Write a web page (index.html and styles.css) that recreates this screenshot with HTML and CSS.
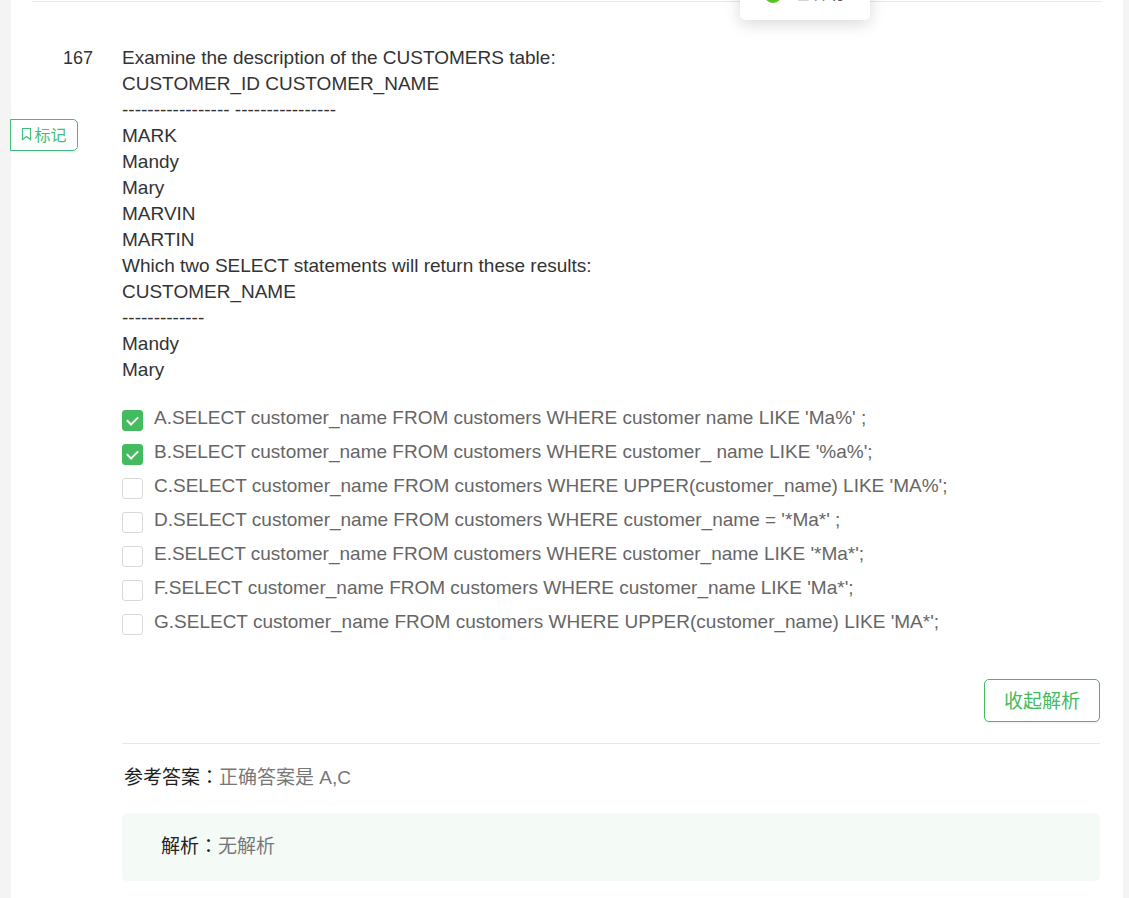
FILE: index.html
```html
<!DOCTYPE html>
<html lang="zh-CN">
<head>
    <meta charset="UTF-8">
    <meta name="viewport" content="width=device-width, initial-scale=1.0">
    <title>答题解析</title>
    <link rel="stylesheet" href="styles.css">
</head>
<body>
    <div class="message" role="status">
        <svg class="message-icon" viewBox="0 0 18 18" aria-hidden="true">
            <circle cx="9" cy="9" r="9" fill="#52c41a"/>
            <path d="M5 9l3 3 5-6" fill="none" stroke="#fff" stroke-width="2"/>
        </svg>
        <span>已保存</span>
    </div>

    <main class="paper">
        <section class="question">
            <div class="side">
                <span class="number">167</span>
                <button type="button" class="mark-btn">
                    <svg class="mark-icon" viewBox="0 0 12 14" aria-hidden="true">
                        <path d="M1.5 1.5h8v11L5.5 9.5l-4 3z" fill="none" stroke="currentColor" stroke-width="1.2"/>
                    </svg>
                    <span>标记</span>
                </button>
            </div>

            <div class="content">
                <div class="stem">
                    Examine the description of the CUSTOMERS table:<br>
                    CUSTOMER_ID CUSTOMER_NAME<br>
                    ----------------- ----------------<br>
                    MARK<br>
                    Mandy<br>
                    Mary<br>
                    MARVIN<br>
                    MARTIN<br>
                    Which two SELECT statements will return these results:<br>
                    CUSTOMER_NAME<br>
                    -------------<br>
                    Mandy<br>
                    Mary
                </div>

                <div class="options">
                    <label class="option"><input type="checkbox" checked><span>A.SELECT customer_name FROM customers WHERE customer name LIKE 'Ma%' ;</span></label>
                    <label class="option"><input type="checkbox" checked><span>B.SELECT customer_name FROM customers WHERE customer_ name LIKE '%a%';</span></label>
                    <label class="option"><input type="checkbox"><span>C.SELECT customer_name FROM customers WHERE UPPER(customer_name) LIKE 'MA%';</span></label>
                    <label class="option"><input type="checkbox"><span>D.SELECT customer_name FROM customers WHERE customer_name = '*Ma*' ;</span></label>
                    <label class="option"><input type="checkbox"><span>E.SELECT customer_name FROM customers WHERE customer_name LIKE '*Ma*';</span></label>
                    <label class="option"><input type="checkbox"><span>F.SELECT customer_name FROM customers WHERE customer_name LIKE 'Ma*';</span></label>
                    <label class="option"><input type="checkbox"><span>G.SELECT customer_name FROM customers WHERE UPPER(customer_name) LIKE 'MA*';</span></label>
                </div>

                <div class="actions">
                    <button type="button" class="toggle-btn">收起解析</button>
                </div>

                <div class="answer"><b>参考答案<span class="colon" lang="zh-TW">：</span></b>正确答案是 A,C</div>
                <div class="analysis"><b>解析<span class="colon" lang="zh-TW">：</span></b>无解析</div>
            </div>
        </section>
    </main>
</body>
</html>
```

FILE: styles.css
```css
* {
    box-sizing: border-box;
}
body {
    margin: 0;
    background-color: #f4f4f4;
    color: #333;
    font-family: "Liberation Sans", Arial, "Noto Sans CJK SC", sans-serif;
    font-size: 19px;
    line-height: 26px;
}
button {
    font-family: inherit;
    background-color: #fff;
    color: #44bb5e;
    border: 1px solid #44bb5e;
    border-radius: 5px;
    box-shadow: 0 2px 2px rgba(0, 0, 0, 0.04);
    cursor: pointer;
}

.message {
    position: absolute;
    top: -32px;
    left: 740px;
    width: 130px;
    height: 52px;
    padding: 0 24px;
    display: flex;
    align-items: center;
    gap: 12px;
    background-color: #fff;
    border-radius: 5px;
    box-shadow: 0 4px 16px rgba(0, 0, 0, 0.15);
    color: #555;
    font-size: 18px;
    line-height: 24px;
    white-space: nowrap;
}
.message span {
    padding-bottom: 2px;
}
.message-icon {
    width: 18px;
    height: 18px;
    flex: none;
}

.paper {
    min-height: 100vh;
    margin: 0 6px 0 11px;
    padding: 1px 21px 17px;
    background-color: #fff;
}
.question {
    display: flex;
    border-top: 1px solid #e8e8e8;
    padding: 43px 2px 0 0;
}
.side {
    width: 90px;
    flex: none;
}
.number {
    display: block;
    padding-left: 31px;
    font-size: 18px;
}
.mark-btn {
    display: flex;
    align-items: center;
    justify-content: center;
    gap: 1px;
    width: 68px;
    height: 32px;
    margin: 48px 0 0 -22px;
    padding: 0 0 2px;
    border-color: #41be7c;
    border-radius: 0 5px 5px 0;
    color: #41be7c;
    font-size: 16px;
}
.mark-icon {
    width: 12px;
    height: 14px;
}

.content {
    flex: 1;
    min-width: 0;
}
.options {
    margin-top: 22px;
    color: #666;
}
.option {
    display: flex;
    gap: 11px;
    min-height: 34px;
}
.option input {
    appearance: none;
    flex: none;
    width: 21px;
    height: 21px;
    margin: 5px 0 0;
    border: 1px solid #d9d9d9;
    border-radius: 3px;
    background-color: #fff;
    position: relative;
}
.option input:checked {
    background-color: #44bb5e;
    border-color: #44bb5e;
}
.option input:checked::after {
    content: "";
    position: absolute;
    left: 6px;
    top: 3px;
    width: 5px;
    height: 9px;
    border: solid #fff;
    border-width: 0 2px 2px 0;
    transform: rotate(45deg);
}

.actions {
    display: flex;
    justify-content: flex-end;
    margin-top: 36px;
    padding-bottom: 21px;
    border-bottom: 1px solid #e8e8e8;
}
.toggle-btn {
    width: 116px;
    height: 43px;
    padding: 0 0 2px;
    font-size: 19px;
}

.answer {
    margin-top: 21px;
    padding-left: 2px;
    color: #777;
}
.analysis {
    margin-top: 22px;
    padding: 21px 39px;
    background-color: #f4fbf7;
    border-radius: 5px;
    color: #777;
}
.answer b, .analysis b {
    color: #222;
    font-weight: 400;
}
.colon {
    font-family: "Noto Sans CJK TC", sans-serif;
    line-height: 1;
}
```
